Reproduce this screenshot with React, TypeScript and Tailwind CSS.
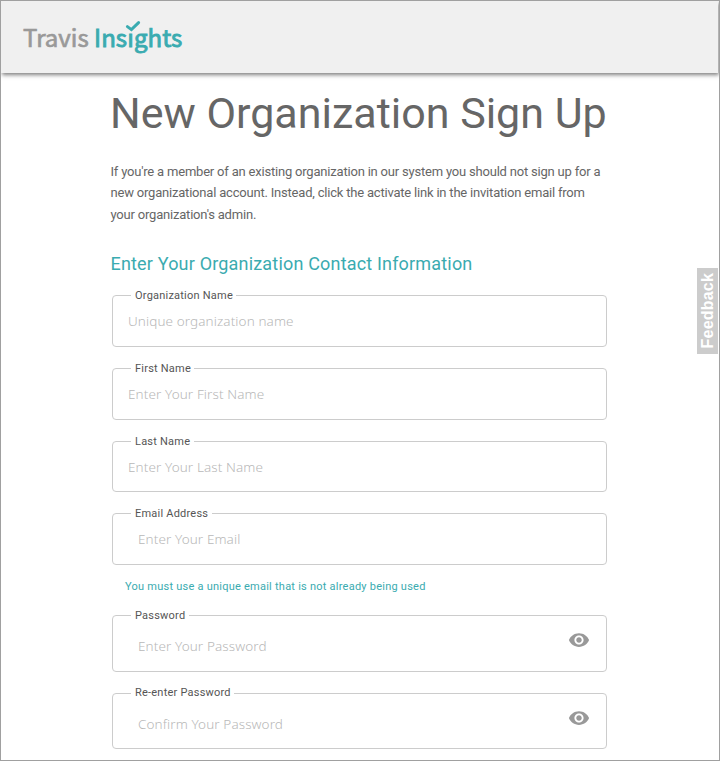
import React from "react";

type FieldProps = {
  label: string;
  placeholder: string;
  box: string;
  legend: string;
  input: string;
  secret?: boolean;
};

function EyeIcon() {
  return (
    <svg viewBox="0 0 24 24" className="mr-[16px] mt-[13px] h-[22px] w-[22px] shrink-0" fill="#999999">
      <path d="M12 4.5C7 4.5 2.73 7.61 1 12c1.73 4.39 6 7.5 11 7.5s9.27-3.11 11-7.5c-1.73-4.39-6-7.5-11-7.5zM12 17c-2.76 0-5-2.24-5-5s2.24-5 5-5 5 2.24 5 5-2.24 5-5 5zm0-8c-1.66 0-3 1.34-3 3s1.34 3 3 3 3-1.34 3-3-1.34-3-3-3z" />
    </svg>
  );
}

function Field({ label, placeholder, box, legend, input, secret }: FieldProps) {
  return (
    <div className={`relative flex w-[495px] rounded-[4px] border border-[#cccccc] ${box}`}>
      <label
        className={`absolute left-[18px] h-[16px] whitespace-nowrap bg-white pl-[4px] text-[11px] leading-[16px] tracking-[0.22px] text-[#555555] ${legend}`}
      >
        {label}
      </label>
      <input
        type={secret ? "password" : "text"}
        placeholder={placeholder}
        className={`h-[20px] min-w-0 flex-1 bg-transparent font-['Noto_Sans',sans-serif] text-[13.5px] font-light leading-[20px] tracking-[0.1px] outline-none placeholder:text-[#b8b8b8] ${input}`}
      />
      {secret && <EyeIcon />}
    </div>
  );
}

export default function App() {
  return (
    <div className="relative flex h-[761px] w-[720px] flex-col overflow-hidden border border-[#a0a0a0] bg-white font-['Roboto',sans-serif] text-[#666666]">
      <header className="mr-px h-[72px] shrink-0 bg-[#f0f0f0] shadow-[1px_2px_4px_rgba(0,0,0,0.5)]">
        <div className="relative ml-[22px] mt-[19px] flex h-[34px] w-[162px] items-center whitespace-nowrap font-['Noto_Sans_CJK_SC',sans-serif] text-[24px] font-normal leading-[34px]">
          <span className="w-[71px] text-[#999999] [-webkit-text-stroke:0.7px_#999999]">Travis</span>
          <span className="tracking-[0.1px] text-[#3aabb0] [-webkit-text-stroke:0.9px_#3aabb0]">Insights</span>
          <svg className="absolute left-[102px] top-0 h-[14px] w-[16px]" viewBox="0 0 16 14">
            <rect x="3" y="3" width="8" height="9" fill="#f0f0f0" />
            <path d="M2.4 6.6L6.4 9.6L13.6 2.6" fill="none" stroke="#3aabb0" strokeWidth="3" strokeLinecap="round" />
          </svg>
        </div>
      </header>
      <main className="ml-[110px] w-[500px]">
        <h1 className="-ml-px mt-[14px] h-[52px] whitespace-nowrap text-[43px] leading-[52px] text-[#666666]">New Organization Sign Up</h1>
        <p className="-ml-[0.5px] mt-[22px] whitespace-nowrap text-[13px] leading-[21.4px] tracking-[-0.2px]">
          If you're a member of an existing organization in our system you should not sign up for a
          <br />
          new organizational account. Instead, click the activate link in the invitation email from
          <br />
          your organization's admin.
        </p>
        <h2 className="-ml-[0.5px] mt-[24.3px] h-[28px] whitespace-nowrap text-[18px] leading-[28px] tracking-[0.18px] text-[#3aabb0]">
          Enter Your Organization Contact Information
        </h2>
        <form className="mt-[17.5px] flex flex-col pl-px">
          <Field label="Organization Name" placeholder="Unique organization name" box="h-[52px]" legend="-top-[8px] w-[105px]" input="ml-[15px] mt-[15px]" />
          <Field label="First Name" placeholder="Enter Your First Name" box="mt-[21px] h-[52px]" legend="-top-[8px] w-[63px]" input="ml-[15px] mt-[15px]" />
          <Field label="Last Name" placeholder="Enter Your Last Name" box="mt-[21px] h-[51px]" legend="-top-[8px] w-[63px]" input="ml-[15px] mt-[15px]" />
          <Field label="Email Address" placeholder="Enter Your Email" box="mt-[21px] h-[52px]" legend="-top-[8px] w-[81px]" input="ml-[25px] mt-[15px]" />
          <p className="ml-[13px] mt-[14px] h-[16px] whitespace-nowrap text-[11px] leading-[16px] tracking-[0.24px] text-[#3aabb0]">
            You must use a unique email that is not already being used
          </p>
          <Field label="Password" placeholder="Enter Your Password" box="mt-[20px] h-[57px]" legend="-top-[8px] w-[58px]" input="ml-[25px] mt-[20px]" secret />
          <Field label="Re-enter Password" placeholder="Confirm Your Password" box="mt-[21px] h-[56px]" legend="-top-[9px] w-[103px]" input="ml-[25px] mt-[20px]" secret />
        </form>
      </main>
      <button className="absolute right-px top-[267px] flex h-[86px] w-[21px] items-center justify-center bg-[#cccccc]">
        <span className="rotate-180 whitespace-nowrap font-['Liberation_Sans',Arial,sans-serif] text-[16px] font-bold leading-[20px] tracking-[0.2px] text-white [writing-mode:vertical-rl]">
          Feedback
        </span>
      </button>
    </div>
  );
}
